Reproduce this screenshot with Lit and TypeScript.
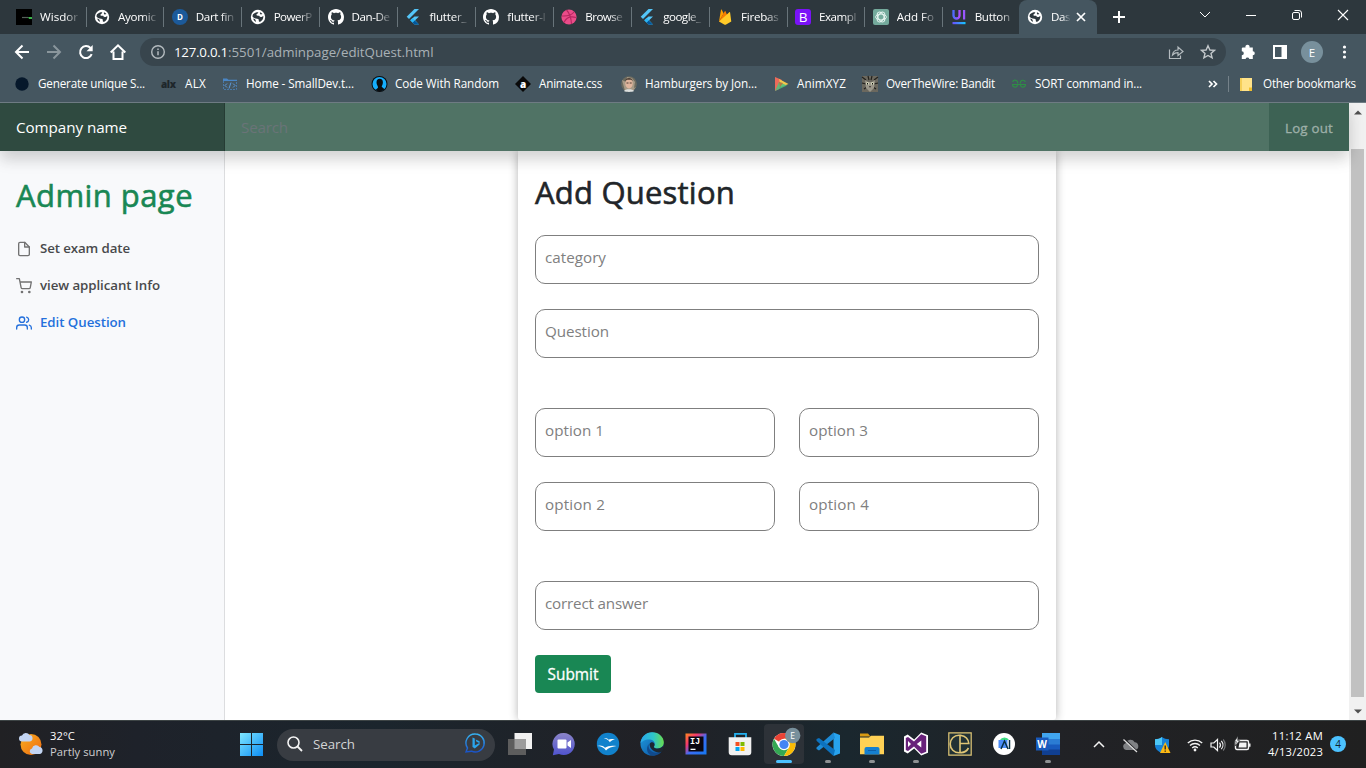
import { LitElement, html, css, svg, nothing, TemplateResult } from "lit";
import { customElement, property } from "lit/decorators.js";

/** A single line of text whose tracking is adjusted to fill a given width. */
@customElement("fit-text")
class FitText extends LitElement {
  @property() text = "";
  @property({ type: Number }) w = 0;

  static styles = css`
    :host { display: inline-block; white-space: pre; flex: none; }
    .line { display: inline-block; }
  `;

  firstUpdated() {
    const line = this.renderRoot.querySelector(".line") as HTMLElement;
    const natural = line.getBoundingClientRect().width;
    line.style.letterSpacing = `${(this.w - natural) / this.text.length}px`;
  }

  render() {
    return html`<span class="line">${this.text}</span>`;
  }
}

const t = (text: string, w: number) => html`<fit-text .text=${text} .w=${w}></fit-text>`;

const icon = (body: unknown, size = 16, box = "0 0 16 16") =>
  html`<svg width=${size} height=${size} viewBox=${box} fill="none">${body}</svg>`;

const globe = svg`<circle cx="8" cy="8" r="7.2" fill="#fff"/>
  <path d="M3 5.2C4.5 3.6 7 3 8 3.2c1 .3-.8 1.6-1.5 2.2s.2 1.4 1.6 1.3 2 .6 1.6 1.6c.9 0 2.6-.4 3.6-1.2.3 2.6-1 4.6-3 5.6-1 .4-1.600-.3-1.500-1.200.1-1-.3-1.600-1.600-1.700C5 9.600 3 8.600 2.400 7.200z" fill="#2d373d"/>
  <path d="M10 3.200c1 .3 1.900 1 2.400 1.800l-1.700.5c-.8-.4-1-1.300-.7-2.300zM3.200 9.500c1 .3 2 .8 2.400 1.500l.3 1.900C4.500 12.300 3.500 11 3.200 9.500z" fill="#2d373d"/>`;
const github = svg`<path fill="#fff" d="M8 0C3.580 0 0 3.580 0 8c0 3.540 2.290 6.530 5.470 7.590.4.070.55-.17.55-.38 0-.19-.01-.82-.01-1.490-2.010.37-2.530-.49-2.690-.94-.09-.23-.48-.94-.82-1.130-.28-.15-.68-.52-.01-.53.63-.01 1.080.58 1.230.82.72 1.210 1.870.87 2.330.66.07-.52.28-.87.51-1.070-1.780-.2-3.640-.89-3.640-3.950 0-.87.31-1.590.82-2.150-.08-.2-.36-1.020.08-2.120 0 0 .67-.21 2.200.82.64-.18 1.320-.27 2-.27s1.360.09 2 .27c1.530-1.040 2.200-.82 2.200-.82.44 1.100.16 1.920.08 2.120.51.56.82 1.270.82 2.150 0 3.070-1.870 3.750-3.650 3.950.29.25.54.73.54 1.480 0 1.070-.01 1.930-.01 2.200 0 .21.15.46.55.38A8 8 0 0 0 16 8c0-4.420-3.580-8-8-8z"/>`;
const flutter = svg`<path d="M9.500 0H14L4 10 1.700 7.800z" fill="#54c5f8"/><path d="M9.500 7.400H14l-3.900 3.900L14 15.600H9.500L5.300 11.300z" fill="#54c5f8"/><path d="M7.500 13.500l2.200-2.200L14 15.600H9.500z" fill="#01579b"/><path d="M5.300 11.300l2.200-2.200 2.200 2.200-2.200 2.200z" fill="#29b6f6"/>`;
const dart = svg`<circle cx="8" cy="8" r="8" fill="#1c5a9a"/><text x="8" y="11" text-anchor="middle" font-size="8" font-weight="700" fill="#fff">D</text>`;
const wisdom = svg`<path d="M0 0h16v16H0z" fill="#000"/><path d="M6 8.500h6" stroke="#55615a" stroke-width="1.200"/><path d="M12 8h4v2h-3z" fill="#3bb44a"/>`;
const dribbble = svg`<circle cx="8" cy="8" r="7.600" fill="#ea4c89"/><path d="M5.500 1c3 3 4.700 8 5 14M1 7c5 .3 9.500-.5 12-4M3 13.500c2-4.500 6.500-6.500 12-5" stroke="#b5265f" stroke-width="1.100"/>`;
const firebase = svg`<path d="M2 12.500L4 .8c.1-.4.5-.4.700-.1l2 3.700z" fill="#ffa000"/><path d="M2 12.500L7.800 2.300c.2-.4.500-.4.700 0L13 13z" fill="#f57c00"/><path d="M2 12.500L12.300 3.200c.3-.3.7-.1.800.3L14.300 12.500 8.700 15.700c-.4.200-.7.200-1.100 0z" fill="#ffca28"/>`;
const bootstrap = svg`<rect width="16" height="16" rx="3" fill="#7a12f8"/><text x="8" y="13" text-anchor="middle" font-size="13.500" font-weight="500" fill="#fff">B</text>`;
const gpt = svg`<rect width="16" height="16" rx="2" fill="#74aa9c"/><g stroke="#e7f5f1" stroke-width=".9"><ellipse cx="8" cy="8" rx="5.400" ry="2.900"/><ellipse cx="8" cy="8" rx="5.400" ry="2.900" transform="rotate(60 8 8)"/><ellipse cx="8" cy="8" rx="5.400" ry="2.900" transform="rotate(120 8 8)"/></g>`;
const uiball = svg`<defs><linearGradient id="u"><stop stop-color="#4f6bff"/><stop offset="1" stop-color="#b04dff"/></linearGradient><linearGradient id="v"><stop stop-color="#6a4dff"/><stop offset="1" stop-color="#12c8ff"/></linearGradient></defs><path d="M2.500 1v5.500a3 3 0 0 0 6 0V1" stroke="url(#u)" stroke-width="2.300"/><path d="M12 1h2.200v9.500H12z" fill="#9a56ff"/><path d="M1.500 13h13v2.200h-13z" fill="url(#v)"/>`;

const tabs: [unknown, string, number][] = [
  [wisdom, "Wisdor", 38], [globe, "Ayomic", 38], [dart, "Dart fin", 38], [globe, "PowerP", 38],
  [github, "Dan-De", 38], [flutter, "flutter_", 37], [github, "flutter-l", 38], [dribbble, "Browse", 37],
  [flutter, "google_", 37.5], [firebase, "Firebas", 37.5], [bootstrap, "Exampl", 37], [gpt, "Add Fo", 37], [uiball, "Button", 35],
];

const bookmarks: [unknown, string, number, number?][] = [
  [svg`<circle cx="8" cy="8" r="6.700" fill="#06182b"/>`, "Generate unique S...", 107],
  [svg`<text x="0" y="11.500" font-size="10" font-weight="800" fill="#1e262b" textLength="15">alx</text>`, "ALX", 21],
  [svg`<path d="M1 2.500h4l1.500 1.200H15V5H1z" fill="#4a86c5"/><path d="M1.500 5v8.500h13V5" stroke="#4979a8" stroke-width="1" stroke-dasharray="2 1"/><path d="M5 7.500L3 9.500l2 2M11 7.500l2 2-2 2M9 6.500l-2 6" stroke="#5d9ada"/>`, "Home - SmallDev.t...", 108, 1],
  [svg`<circle cx="8.500" cy="8" r="8" fill="#0a0d10"/><circle cx="8.500" cy="8" r="7" fill="#16aefc"/><path d="M5.500 6.500a3.200 3.700 0 0 1 6.400 0c0 2-1 3-1.200 4.200l2.800 2.500a7 7 0 0 1-9 .8l2.500-2.300C7 9.800 5.500 8.500 5.500 6.500z" fill="#0a0d10"/>`, "Code With Random", 104],
  [svg`<path d="M8 0l8 8-8 8-8-8z" fill="#0a0a0a"/><text x="8" y="11.500" text-anchor="middle" font-size="10" font-weight="800" fill="#fff">a</text>`, "Animate.css", 63, 3],
  [svg`<circle cx="8" cy="8" r="7.800" fill="#6b6a5e"/><path d="M1 4l4 2 1-5 5 1 3 4-1 6 2-1-3 4H4z" fill="#a79a86"/><ellipse cx="8" cy="7.500" rx="3.700" ry="5" fill="#e0b59d"/><path d="M4.300 5C4.500 1 11.500 1 11.700 5l-1.500-1.300H6z" fill="#4c3e33"/><path d="M5.500 7h2M8.700 7h2" stroke="#4c3e33"/><path d="M3 15c1-2.500 9-2.500 10 0-2 1.200-8 1.200-10 0z" fill="#dde0df"/>`, "Hamburgers by Jon...", 112],
  [svg`<path d="M2 1l7 3-3 9-4 2z" fill="#ed6a5a"/><path d="M6 3l9.500 5L8 11z" fill="#f5c84b"/><path d="M2 15l4-9 8 3.500z" fill="#4dbf7c" opacity=".85"/><path d="M6 6l4 1-3 4z" fill="#b07a45"/>`, "AnimXYZ", 49],
  [svg`<path d="M0 0h16v16H0z" fill="#6b685e"/><path d="M0 1l4 3M16 1l-4 3M0 7l4 1M16 7l-4 1M2 13l3-2M14 13l-3-2M6 0l1 4M10 0L9 4" stroke="#22211d" stroke-width="1.200"/><path d="M3 4l3 2h4l3-2-1 8-4 4-4-4z" fill="#9b978a"/><circle cx="5.500" cy="7.500" r="1.500" fill="#d4d5b8"/><circle cx="10.500" cy="7.500" r="1.500" fill="#d4d5b8"/><path d="M5.500 7v1.500M10.500 7v1.500" stroke="#111"/><path d="M7 10h2l-1 2z" fill="#37302b"/>`, "OverTheWire: Bandit", 109],
  [svg`<path d="M1 8.500h14M6.500 8.500a2.500 2.500 0 1 1-5 .3M1.700 6a2.500 2.500 0 0 1 4.800 1.500M9.500 8.500a2.500 2.500 0 1 0 5 .3M14.300 6a2.500 2.500 0 0 0-4.800 1.500" stroke="#2f8d46" stroke-width="1.200"/>`, "SORT command in...", 107],
];

interface App { art: TemplateResult; state?: string; }

const big = (body: unknown) => icon(body, 24, "0 0 24 24");

const apps: App[] = [
  { art: big(svg`<path d="M6.500 1H24v16H6.500z" fill="#f1f1f1"/><path d="M0 7h18v16H0z" fill="#5d5d5d"/><path d="M6.500 7H18v10H6.500z" fill="#9c9c9c"/>`) },
  { art: big(svg`<defs><linearGradient id="ch" x2="0" y2="1"><stop stop-color="#8b84c8"/><stop offset="1" stop-color="#5054cf"/></linearGradient></defs><path d="M12 1a11 11 0 1 1-5 20.900L.8 23.200 2 17.500A11 11 0 0 1 12 1z" fill="url(#ch)"/><rect x="5.500" y="7.500" width="9" height="9" rx="1" fill="#fff"/><path d="M15.500 10.500L19 8v8l-3.500-2.500z" fill="#fff"/>`) },
  { art: big(svg`<circle cx="12" cy="12" r="11.200" fill="#1182cc"/><path d="M8 6.500c2-.5 3.500 0 4.500 1.200 1.500-.8 4-.8 6.500-.2-2.500.3-4 1.200-5.200 2.700-.8-1.800-2.300-3-5.800-3.700zM1 14c3-1.200 6-.6 8 1.800 2.500-2 6.500-2.500 11.500-1.800-5 .7-8 2-10.500 4.500C8 15.500 5 14.200 1 14z" fill="#fff"/>`) },
  { art: big(svg`<defs><linearGradient id="e1"><stop stop-color="#2aa6ec"/><stop offset=".55" stop-color="#2ec6c9"/><stop offset="1" stop-color="#69dc4e"/></linearGradient><linearGradient id="e2" x2="1" y2="1"><stop stop-color="#1f9bdd"/><stop offset="1" stop-color="#0b4fa0"/></linearGradient></defs><circle cx="12" cy="12" r="11.500" fill="url(#e2)"/><path d="M.5 11.500C1 5 6 .3 12.200.3c7 0 11.600 5 11.600 10 0 3.800-2.700 6.200-6 6.200-2.500 0-4-.8-4-1.800 0-.8 1-1.100 1-2.900 0-2.400-2.400-4.400-5.800-4.400C4.500 7.400 1.500 9.500.5 11.500z" fill="url(#e1)"/><path d="M8.700 12c-1 5.500 3.500 9 8.500 8.800 2 0 3.800-.8 5-2-1.500 2.900-5 4.900-9 4.900C7 23.500 5.500 16 8.700 12z" fill="#114a8c"/><path d="M9.600 12c.7-2 3.500-2.300 4.600-.6.8 1.400.1 2.600-.4 3.300 0 1 1.500 1.800 4 1.800 2.100 0 4-.9 5-2.500l.7 3.500-2 2.500c-5 1.700-12-2-11.900-8z" fill="#1d2730"/>`) },
  { art: big(svg`<defs><linearGradient id="ij" x2="1" y2="1"><stop stop-color="#ff8a1f"/><stop offset=".3" stop-color="#f7366c"/><stop offset=".55" stop-color="#3c6cf5"/><stop offset="1" stop-color="#1479f2"/></linearGradient></defs><path d="M1.500 1.500h21v21h-21z" fill="url(#ij)"/><path d="M4.500 4.500h15v15h-15z" fill="#0b0610"/><path d="M6.500 16.700h5v1.300h-5z" fill="#fff"/><text x="6" y="12" font-family="Liberation Mono" font-size="8.500" font-weight="700" fill="#fff">IJ</text>`) },
  { art: big(svg`<path d="M7 6V1.800h11V6" stroke="#24b1ef" stroke-width="1.800"/><path d="M.7 5.200h22.600v15a3 3 0 0 1-3 3H3.700a3 3 0 0 1-3-3z" fill="#f1f1f1"/><path d="M7.500 10h4v4h-4z" fill="#f25022"/><path d="M12.500 10h4v4h-4z" fill="#7fba00"/><path d="M7.500 15h4v4h-4z" fill="#00a4ef"/><path d="M12.500 15h4v4h-4z" fill="#ffb900"/>`) },
  { state: "active", art: big(svg`<circle cx="12" cy="12.500" r="11.500" fill="#fff"/><path d="M12 12.500L2 6.800A11.500 11.500 0 0 1 22 6.800H12z" fill="#ea4335"/><path d="M2 6.800A11.500 11.500 0 0 0 12 24l5-8.600-5-2.900-5 2.900z" fill="#34a853"/><path d="M12 24A11.500 11.500 0 0 0 22 6.800H12l5 8.600z" fill="#fbbc04"/><circle cx="12" cy="12.500" r="5.800" fill="#fff"/><circle cx="12" cy="12.500" r="4.600" fill="#4285f4"/><circle cx="20.700" cy="3.500" r="7.700" fill="#78909c"/><text x="20.700" y="6.700" text-anchor="middle" font-size="8.500" fill="#fff">E</text>`) },
  { state: "open", art: big(svg`<path d="M17.500.5L24 3v18.500L17.500 24z" fill="#27a3ee"/><path d="M17.500.5L19 6 3 18.500.5 17v-1.500z" fill="#1d8bd6"/><path d="M17.500 24l1.500-6L3 6 .5 7v1.700z" fill="#0c72bf"/>`) },
  { state: "open", art: big(svg`<path d="M0 1.500h8l2.500 3H0z" fill="#d89a12"/><path d="M0 5.500h9l2-1.700h13v18.500H0z" fill="#ffd155"/><path d="M4.500 22.500V17a2 2 0 0 1 2-2h11a2 2 0 0 1 2 2v5.500z" fill="#1580d0"/><path d="M8 18.500h8" stroke="#0d5fa8"/>`) },
  { state: "open", art: big(svg`<path d="M17.200.5L24 3.200v17.600l-6.800 2.700-7-7-6.500 5L0 19.500v-15l3.700-2 6.500 5z" fill="#fff"/><path d="M17.200 2.200l5 2v15.600l-5 2-7.200-7.200-6 4.500-2.200-1.200V6.100L4 4.900l6 4.500zM17.300 8.500L12.800 12l4.500 3.500zM4 9v6l3-3z" fill="#68217a" fill-rule="evenodd"/>`) },
  { art: big(svg`<path d="M.8.8h22.400v22.400H.8z" fill="#213134" stroke="#e0c676" stroke-width="1.200"/><path d="M13.500 3.200H11a8.800 8.800 0 0 0 0 17.600h3.500M12 3.200v17.600M13 3.500a8.300 8.300 0 0 1 7.800 8H12M12.500 20.500a8.500 8.500 0 0 0 8-4.500" stroke="#e0c676" stroke-width="1.600"/>`) },
  { art: big(svg`<circle cx="12" cy="12" r="11" fill="#fff"/><path d="M8 8a4.800 4 0 0 1 9 0z" fill="#3ddc84"/><path d="M6.500 8h9v8h-9z" fill="#4b8df8"/><path d="M9 17l3.500-8 3.500 8M17.500 8v9" stroke="#073042" stroke-width="1.500"/>`) },
  { state: "open", art: big(svg`<path d="M6 1h18v22H6z" fill="#2b7cd3"/><path d="M6 1h18v6H6z" fill="#41a5ee"/><path d="M6 12.500h18V18H6z" fill="#185abd"/><path d="M6 17.500h18V23H6z" fill="#103f91"/><path d="M0 5.500h12.500v13H0z" fill="#185abd"/><text x="6.200" y="15.500" text-anchor="middle" font-size="10" font-weight="700" fill="#fff">W</text>`) },
];

@customElement("app-root")
class AppRoot extends LitElement {
  static styles = css`
    :host { display: flex; flex-direction: column; width: 1366px; height: 768px; overflow: hidden; background: #fff; color: #212529;
      font-family: "Open Sans", "Noto Sans", sans-serif; }
    * { box-sizing: border-box; }
    svg { display: block; flex: none; overflow: visible; }

    .strip { height: 34px; display: flex; background: #2d373d; padding-left: 8px; }
    .tabs { width: 1011px; display: flex; flex: none; }
    .tab { flex: 0 0 77.9px; min-width: 0; display: flex; align-items: center; padding-left: 8px; }
    .tab:last-child { flex-basis: 76px; }
    .label { width: 40px; flex: none; margin-left: 8px; font-size: 11.600px; line-height: 20px; color: #fff;
      -webkit-mask-image: linear-gradient(90deg, #000 62%, rgba(0, 0, 0, .15) 96%); }
    .divider { width: 1px; flex: none; height: 20px; background: #68747a; margin-left: 5.5px; }
    .current { width: 78px; flex: none; background: #455660; border-radius: 8px 8px 0 0; display: flex; align-items: center; padding-left: 8px; }
    .current .label { width: 19px; margin-right: 3px; }
    .newtab { width: 22px; display: flex; justify-content: center; margin-left: 11px; }
    .window { flex: 1; display: flex; align-items: center; justify-content: flex-end; gap: 30px; padding: 0 15px 5px 0; }

    .toolbar { height: 36px; background: #455660; display: flex; align-items: center; padding: 0 0 0 14px; }
    .nav { display: flex; gap: 16px; width: 126px; flex: none; }
    .address { width: 1086px; flex: none; height: 28px; border-radius: 14px; background: #38454d; display: flex; align-items: center; padding: 0 10px 0 10px; font-size: 13.300px; color: #a9b1b6; line-height: 20px; }
    .address .host { color: #fff; margin-left: 8px; }
    .address .grow { flex: 1; }
    .address .star { margin-left: 16px; }
    .tools { display: flex; align-items: center; gap: 16px; padding-left: 14px; }
    .avatar { width: 22px; height: 22px; border-radius: 50%; background: #78909c; color: #fff; font-size: 11.500px; display: grid; place-items: center; margin: 0 -3px; }

    .bookmarks { height: 33px; background: #455660; border-bottom: 1px solid #6e7b83; display: flex; align-items: center; padding: 0 10px 4px 14px; color: #fff; font-size: 11.700px; line-height: 18px; gap: 16px; flex: none; }
    .bookmarks fit-text { margin-bottom: 2px; }
    .bookmark { display: flex; align-items: center; gap: 8px; }
    .grow { flex: 1; }
    .others { display: flex; align-items: center; gap: 10px; border-left: 1px solid #75828a; padding-left: 11px; height: 16px; margin-left: -6px; }

    .view { height: 617px; display: flex; overflow: hidden; flex: none; }
    .page { width: 1349px; display: flex; flex-direction: column; }
    .topbar { height: 48px; flex: none; display: flex; background: #507365; box-shadow: 0 8px 16px rgba(0, 0, 0, .15), 0 8px 16px rgba(0,0,0,.04); position: relative; z-index: 1; font-size: 15.200px; }
    .brand { width: 225px; background: #2f4a40; box-shadow: inset -1px 0 0 #263c34; color: #fff; display: flex; align-items: center; padding-left: 16px; }
    .search { flex: 1; display: flex; align-items: center; padding-left: 16px; color: #6a7378; }
    .logout { width: 80px; background: #3d6254; display: flex; align-items: center; padding: 2px 0 0 16px; font-size: 13.300px; -webkit-text-stroke: .3px; color: #9eb0a9; }
    .columns { flex: 1; min-height: 0; display: flex; }
    .sidebar { width: 225px; background: #f8f9fb; border-right: 1px solid #dcdddf; padding: 22px 16px; }
    h1, h2 { margin: 0; font-weight: 400; font-size: 31px; line-height: 44px; -webkit-text-stroke: .6px; }
    h1 { color: #198754; }
    .links { display: flex; flex-direction: column; padding-top: 12px; }
    .link { display: flex; align-items: center; gap: 8px; height: 37px; font-size: 13.300px; font-weight: 600; color: #48494b; }
    .link svg { stroke: #727272; margin-top: 2px; }
    .link.on { color: #2470dc; }
    .link.on svg { stroke: #2470dc; }
    .main { flex: 1; display: flex; justify-content: center; }
    .card { width: 538px; padding: 19px 17px; box-shadow: 0 0 10px rgba(0, 0, 0, .3); border-radius: 0 0 3px 3px; }
    .card h2 { margin-bottom: 21px; }
    .group { display: grid; gap: 25px; margin-bottom: 50px; }
    .group.pairs { grid-template-columns: 1fr 1fr; column-gap: 24px; }
    .group.last { margin-bottom: 25px; }
    .field { height: 49px; border: 1px solid #7f7f7f; border-radius: 10px; padding: 0 9px 6px; display: flex; align-items: center; font-size: 15.200px; color: #808080; }
    .submit { width: 76px; height: 38px; border: 0; border-radius: 4px; background: #198754; color: #fff; font-family: inherit; font-size: 15.400px; -webkit-text-stroke: .3px; padding: 0; display: grid; place-items: center; }
    .scroll { width: 17px; background: #f1f1f1; display: flex; flex-direction: column; align-items: center; padding: 7px 0; }
    .thumb { width: 13px; height: 548px; background: #c1c1c1; margin: 31px 0 12px; flex: none; }

    .taskbar { height: 48px; flex: none; background: linear-gradient(90deg, #212124 0%, #1e222a 10%, #1b252d 28%, #212126 48%, #1a272e 62%, #212226 77%, #202020 100%); border-top: 1px solid #3d4445; display: flex; align-items: center; color: #fff; }
    .weather { width: 240px; display: flex; align-items: center; gap: 6px; padding-left: 18px; font-size: 11.200px; line-height: 16px; }
    .weather .sub { color: #cfcfd0; }
    .weather svg { margin-top: -2px; }
    .stack { display: flex; flex-direction: column; padding-bottom: 2px; }
    .find { width: 218px; height: 32px; border-radius: 16px; background: #383c42; margin-left: 14px; display: flex; align-items: center; padding: 0 9px 2px 10px; gap: 10px; font-size: 13.300px; color: #d3d4d5; }
    .apps { display: flex; margin-left: 3px; }
    .app { width: 44px; height: 47px; display: flex; flex-direction: column; align-items: center; padding: 11px 0 0; }
    .app.active { width: 40px; height: 40px; margin: 3px 2px 0; padding-top: 8px; background: #2d3238; border-radius: 4px; }
    .mark { width: 6px; height: 3px; border-radius: 2px; background: #8e9193; margin-top: 4px; }
    .active .mark { width: 16px; background: #4cc2ff; margin-top: 4px; }
    .tray { flex: 1; display: flex; align-items: center; padding-left: 23px; }
    .clock { font-size: 11.200px; line-height: 16px; display: flex; flex-direction: column; align-items: flex-end; width: 65px; margin-left: 8px; padding-bottom: 2px; }
    .count { width: 16px; height: 16px; border-radius: 50%; background: #4cc2ff; color: #10222c; font-size: 10px; line-height: 16px; text-align: center; margin: -2px 0 0 7px; }
    .s1 { margin-left: 17px; } .s2 { margin-left: 16px; } .s3 { margin-left: 17px; } .s4 { margin-left: 7px; } .s5 { margin-left: 8px; }
  `;

  private browser() {
    const w = "#fff";
    return html`
      <div class="strip">
        <div class="tabs">
          ${tabs.map(([art, name, width], i) => html`
            <div class="tab">${icon(art)}<div class="label">${t(name, width)}</div>
              ${i < tabs.length - 1 ? html`<div class="divider"></div>` : nothing}</div>`)}
        </div>
        <div class="current">${icon(globe)}<div class="label">${t("Das", 19)}</div>
          ${icon(svg`<path d="M4 4l8 8M12 4l-8 8" stroke="#fff" stroke-width="1.700"/>`)}</div>
        <div class="newtab">${icon(svg`<path d="M8 2v12M2 8h12" stroke="#fff" stroke-width="2"/>`, 34, "-9 -9 34 34")}</div>
        <div class="window">
          ${icon(svg`<path d="M3 5l5 5 5-5" stroke=${w}/>`)}
          ${icon(svg`<path d="M3 8.500h10" stroke=${w}/>`)}
          ${icon(svg`<rect x="3.500" y="5.500" width="7" height="7" rx="1.500" stroke=${w}/><path d="M5.500 3.500h4.500a2.500 2.500 0 0 1 2.500 2.500v4.500" stroke=${w}/>`)}
          ${icon(svg`<path d="M3 3l10 10M13 3L3 13" stroke=${w} stroke-width="1.100"/>`)}
        </div>
      </div>
      <div class="toolbar">
        <div class="nav">
          ${icon(svg`<path d="M15 8H2.500M8.500 1.500L2 8l6.500 6.500" stroke=${w} stroke-width="2"/>`)}
          ${icon(svg`<path d="M1 8h12.500M7.500 1.500L14 8l-6.500 6.500" stroke="#8a969c" stroke-width="2"/>`)}
          ${icon(svg`<path d="M13.700 10.200A6 6 0 1 1 12.500 4" stroke=${w} stroke-width="2"/><path d="M14.700 1v6.200H8.500z" fill=${w}/>`)}
          ${icon(svg`<path d="M3.500 7.500V15h9V7.500M.7 8.500L8 1.300l7.300 7.200" stroke=${w} stroke-width="2"/>`)}
        </div>
        <div class="address">
          ${icon(svg`<circle cx="8" cy="8" r="6.300" stroke="#b4bbbf" stroke-width="1.400"/><path d="M8 7.200v4M8 4.500v1.500" stroke="#b4bbbf" stroke-width="1.500"/>`)}
          <span class="host">${t("127.0.0.1", 54)}</span>${t(":5501/adminpage/editQuest.html", 205.5)}
          <div class="grow"></div>
          ${icon(svg`<path d="M1.500 5.500v9h11v-3" stroke="#b4bbbf" stroke-width="1.200"/><path d="M4.500 11c.5-3.500 2.500-5 5.500-5V3l5 4.500-5 4V8.700c-2.500 0-4 .8-5.500 2.300z" stroke="#b4bbbf" stroke-width="1.200"/>`)}
          <div class="star">${icon(svg`<path d="M8 1.800l1.900 4.200 4.600.4-3.500 3 1.100 4.500L8 11.500l-4.100 2.400L5 9.400l-3.500-3 4.600-.4z" stroke="#c3c8cb" stroke-width="1.400"/>`)}</div>
        </div>
        <div class="tools">
          ${icon(svg`<path d="M2.500 3.500h3a2.100 2.100 0 1 1 4 0h3.300v3.700a2 2 0 1 1 0 4V15H9.300a1.900 1.900 0 0 0-3.700 0H1.800v-3.800a2 2 0 0 0 0-4V4.200z" fill=${w}/>`)}
          ${icon(svg`<path d="M2 2h12v12H2z" stroke=${w} stroke-width="2"/><path d="M9.500 2H14v12H9.500z" fill=${w}/>`)}
          <div class="avatar">E</div>
          ${icon(svg`<circle cx="8.500" cy="3" r="1.600" fill=${w}/><circle cx="8.500" cy="8" r="1.600" fill=${w}/><circle cx="8.500" cy="13" r="1.600" fill=${w}/>`)}
        </div>
      </div>
      <div class="bookmarks">
        ${bookmarks.map(([art, name, width, extra]) => html`<div class="bookmark" style="padding-right:${extra ?? 0}px">${icon(art)}${t(name, width)}</div>`)}
        <div class="grow"></div>
        ${icon(svg`<path d="M1 2l3 3-3 3M5.500 2l3 3-3 3" stroke="#fff" stroke-width="1.700"/>`, 10, "0 0 10 10")}
        <div class="others">${icon(svg`<path d="M.5 1.500h11.500v13H.5z" fill="#ffe38a"/><path d="M0 1.500h2v13H0z" fill="#f5cf58"/><path d="M9 11h3v3.500H9z" fill="#f0bf2c"/>`, 13, "0 1.500 13 13")}${t("Other bookmarks", 93)}</div>
      </div>`;
  }

  private field(label: string, width: number) {
    return html`<div class="field">${t(label, width)}</div>`;
  }

  private page() {
    const line = (body: unknown) => html`<svg width="16" height="16" viewBox="0 0 24 24" fill="none" stroke-width="2" stroke-linecap="round" stroke-linejoin="round">${body}</svg>`;
    return html`
      <div class="view">
        <div class="page">
          <div class="topbar">
            <div class="brand">${t("Company name", 111)}</div>
            <div class="search">${t("Search", 47)}</div>
            <div class="logout">${t("Log out", 48)}</div>
          </div>
          <div class="columns">
            <div class="sidebar">
              <h1>${t("Admin page", 177)}</h1>
              <div class="links">
                <div class="link">${line(svg`<path d="M13 2H6a2 2 0 0 0-2 2v16a2 2 0 0 0 2 2h12a2 2 0 0 0 2-2V9z"/><path d="M13 2v7h7"/>`)}${t("Set exam date", 90)}</div>
                <div class="link">${line(svg`<circle cx="9" cy="21" r="1"/><circle cx="20" cy="21" r="1"/><path d="M1 1h4l2.680 13.390a2 2 0 0 0 2 1.610h9.720a2 2 0 0 0 2-1.610L23 6H6"/>`)}${t("view applicant Info", 120)}</div>
                <div class="link on">${line(svg`<path d="M17 21v-2a4 4 0 0 0-4-4H5a4 4 0 0 0-4 4v2"/><circle cx="9" cy="7" r="4"/><path d="M23 21v-2a4 4 0 0 0-3-3.870M16 3.130a4 4 0 0 1 0 7.750"/>`)}${t("Edit Question", 86)}</div>
              </div>
            </div>
            <div class="main">
              <div class="card">
                <h2>${t("Add Question", 200)}</h2>
                <div class="group">${this.field("category", 61)}${this.field("Question", 64)}</div>
                <div class="group pairs">${this.field("option 1", 59)}${this.field("option 3", 59)}${this.field("option 2", 60)}${this.field("option 4", 60)}</div>
                <div class="group last">${this.field("correct answer", 103)}</div>
                <button class="submit">${t("Submit", 51)}</button>
              </div>
            </div>
          </div>
        </div>
        <div class="scroll">
          ${icon(svg`<path d="M0 4.500L4 .5l4 4z" fill="#505050"/>`, 8, "0 0 8 8")}
          <div class="thumb"></div>
          ${icon(svg`<path d="M0 .5h8l-4 4z" fill="#505050"/>`, 8, "0 0 8 8")}
        </div>
      </div>`;
  }

  private taskbar() {
    const w = "#f4f4f4";
    return html`
      <div class="taskbar">
        <div class="weather">
          ${icon(svg`<defs><linearGradient id="sun" x2="1" y2="1"><stop stop-color="#f9ae1f"/><stop offset="1" stop-color="#ee6a12"/></linearGradient></defs><circle cx="13" cy="12.500" r="10.500" fill="url(#sun)"/><path d="M4 9.500a3 3 0 0 1 0-6 4.200 4.200 0 0 1 7.500-.5 3.300 3.300 0 0 1 .5 6.500zM14 22a2.800 2.800 0 0 1 0-5.500 4.200 4.200 0 0 1 7.500-1.500 3.600 3.600 0 0 1 .5 7z" fill="#c3d5f3"/>`, 26, "0 0 26 24")}
          <div class="stack">${t("32°C", 25)}<span class="sub">${t("Partly sunny", 65)}</span></div>
        </div>
        ${icon(svg`<defs><linearGradient id="win" x1="0" y1="0" x2="23" y2="23" gradientUnits="userSpaceOnUse"><stop stop-color="#7fe7ff"/><stop offset="1" stop-color="#0c8df5"/></linearGradient></defs><path d="M0 0h11v11H0zM12 0h11v11H12zM0 12h11v11H0zM12 12h11v11H12z" fill="url(#win)"/>`, 23, "0 0 23 23")}
        <div class="find">
          ${icon(svg`<circle cx="6.500" cy="6.500" r="5.500" stroke=${w} stroke-width="1.600"/><path d="M10.500 10.500L15 15" stroke=${w} stroke-width="1.800"/>`)}
          ${t("Search", 42)}
          <div class="grow"></div>
          ${icon(svg`<defs><linearGradient id="bg" x2="0" y2="1"><stop stop-color="#36b3f2"/><stop offset="1" stop-color="#1a53c9"/></linearGradient></defs><path d="M10.500 1a9 9 0 1 1-4 17.200L1 19l1.500-4A9 9 0 0 1 10.500 1z" stroke="url(#bg)" stroke-width="1.400"/><path d="M7.500 4.500l2.300.9v7l4.400-2.300-2.700-1.400-.9-2.200 4 1.700v3.200l-4.800 4-2.300-1.400z" fill="#2aa5ec"/>`, 21, "0 0 21 21")}
        </div>
        <div class="apps">
          ${apps.map((a) => html`<div class="app ${a.state ?? ""}">${a.art}${a.state ? html`<div class="mark"></div>` : nothing}</div>`)}
        </div>
        <div class="tray">
          ${icon(svg`<path d="M1 8l5-5 5 5" stroke=${w} stroke-width="1.500"/>`, 12, "0 0 12 12")}
          <div class="s1">${icon(svg`<path d="M4 13a3.500 3.500 0 0 1-.3-6.800 5 5 0 0 1 9-1A4 4 0 0 1 13.500 13z" fill="#808285"/><path d="M2.500 2L15.500 14.500" stroke="#202124" stroke-width="1.200"/><path d="M1.500 2.500L15 15" stroke="#ddd" stroke-width="1.200"/>`)}</div>
          <div class="s2">${icon(svg`<path d="M8 0c2 1.500 4 2.200 7 2.200V8c0 4-3 6.500-7 8-4-1.500-7-4-7-8V2.200C4 2.200 6 1.500 8 0z" fill="#1683d8"/><path d="M8 0v8H1V2.200C4 2.200 6 1.500 8 0z" fill="#4cc7f6"/><path d="M11.200 5l5.300 11H6z" fill="#fdb913"/><path d="M11.200 8.500v4M11.200 13.500v1.300" stroke="#222" stroke-width="1.300"/>`)}</div>
          <div class="s3">${icon(svg`<path d="M.8 6a10.500 10.500 0 0 1 14.400 0M3 8.500a7.300 7.300 0 0 1 10 0M5.200 11a4.200 4.200 0 0 1 5.600 0" stroke=${w} stroke-width="1.300"/><circle cx="8" cy="13" r="1.400" fill=${w}/>`)}</div>
          <div class="s4">${icon(svg`<path d="M1 6h2.800L7.500 2.500v11L3.800 10H1z" stroke=${w} stroke-width="1.200"/><path d="M9.500 5.500a4 4 0 0 1 0 5M11.300 3.800a6.300 6.300 0 0 1 0 8.400" stroke=${w} stroke-width="1.200"/><path d="M13.200 2.500a8.500 8.500 0 0 1 0 11" stroke="#77797b" stroke-width="1.200"/>`)}</div>
          <div class="s5">${icon(svg`<rect x="1.500" y="3.500" width="13" height="9" rx="1.500" stroke=${w} stroke-width="1.400"/><path d="M5.500 5.500h7v5h-8zM15 6.500h1.500v3.200H15z" fill=${w}/><path d="M4-1L.3 4.700h2L1.200 9l4.500-5.500h-2z" fill=${w} stroke="#202124" stroke-width=".6"/>`)}</div>
          <div class="clock">${t("11:12 AM", 51)}${t("4/13/2023", 55)}</div>
          <div class="count">4</div>
        </div>
      </div>`;
  }

  render() {
    return html`${this.browser()}${this.page()}${this.taskbar()}`;
  }
}
